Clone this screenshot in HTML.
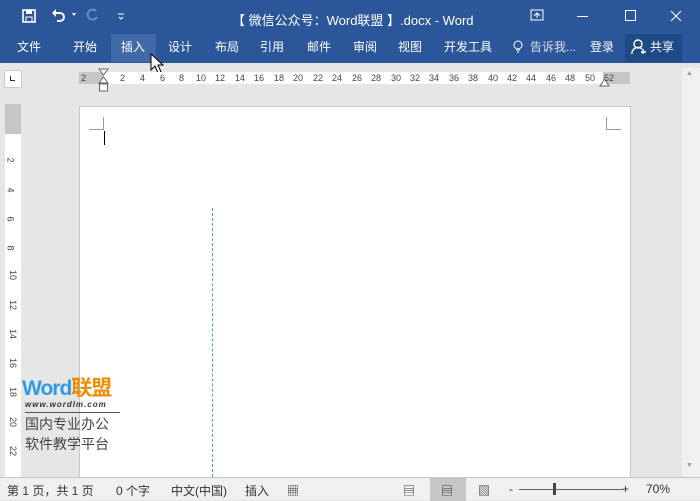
<!DOCTYPE html><html><head><meta charset="utf-8"><style>
*{margin:0;padding:0;box-sizing:border-box}
body{width:700px;height:500px;overflow:hidden;background:#e6e6e6;font-family:"Liberation Sans","Noto Sans CJK SC",sans-serif;position:relative}
.a{position:absolute}
#top{left:0;top:0;width:700px;height:63px;background:#2b579a;color:#fff}
.tab{position:absolute;top:38px;font-size:12px;color:#fff}
.rn{position:absolute;top:73px;font-size:9px;color:#444}
.vn{position:absolute;left:8px;font-size:9px;color:#444;transform:rotate(90deg)}
#sb{left:0;top:477px;width:700px;height:23px;background:#f0f0f0;border-top:1px solid #c6c6c6;font-size:12px;color:#333}
#sb span{position:absolute;top:4px}
</style></head><body>
<div id="top" class="a">
<svg class="a" style="left:22px;top:9px" width="14" height="14"><rect x="1" y="1" width="12" height="12" fill="none" stroke="#fff" stroke-width="1.6"/><rect x="4" y="1" width="6" height="4" fill="#fff"/><rect x="4" y="8" width="6" height="5" fill="none" stroke="#fff"/></svg>
<svg class="a" style="left:50px;top:7px" width="28" height="16"><path d="M4 6h6a4 4 0 0 1 0 8H7" stroke="#fff" stroke-width="2" fill="none"/><path d="M2 6l4-4v8z" fill="#fff"/><path d="M22 6l2 3 2-3z" fill="#fff"/></svg>
<svg class="a" style="left:86px;top:7px" width="14" height="16"><path d="M10 4a5 5 0 1 0 1 6" stroke="#6b8cc0" stroke-width="2" fill="none"/></svg>
<svg class="a" style="left:117px;top:12px" width="8" height="8"><path d="M1 2h6M2 5l2 2 2-2" stroke="#fff" fill="none"/></svg>
<div class="a" style="left:232px;top:10px;font-size:13px">【 微信公众号：Word联盟 】.docx - Word</div>
<svg class="a" style="left:530px;top:9px" width="14" height="12"><rect x="1" y="1" width="12" height="10" fill="none" stroke="#fff"/><path d="M4 7l3-3 3 3M7 4v5" stroke="#fff" fill="none"/></svg>
<div class="a" style="left:577px;top:16px;width:11px;height:1px;background:#fff"></div>
<div class="a" style="left:625px;top:10px;width:11px;height:11px;border:1px solid #fff"></div>
<svg class="a" style="left:670px;top:10px" width="12" height="12"><path d="M1 1l10 10M11 1L1 11" stroke="#fff"/></svg>
<div class="a" style="left:111px;top:34px;width:45px;height:28px;background:#4069aa"></div>
<div class="a" style="left:625px;top:34px;width:57px;height:28px;background:#1e4a85"></div>
<span class="tab" style="left:17px">文件</span><span class="tab" style="left:73px">开始</span><span class="tab" style="left:121px">插入</span><span class="tab" style="left:168px">设计</span><span class="tab" style="left:215px">布局</span><span class="tab" style="left:260px">引用</span><span class="tab" style="left:307px">邮件</span><span class="tab" style="left:353px">审阅</span><span class="tab" style="left:398px">视图</span><span class="tab" style="left:444px">开发工具</span>
<svg class="a" style="left:513px;top:40px" width="10" height="14"><circle cx="5" cy="5" r="4" fill="none" stroke="#fff"/><path d="M3 10h4M4 12h2" stroke="#fff"/></svg>
<span class="tab" style="left:530px;color:#dde">告诉我...</span><span class="tab" style="left:590px">登录</span>
<svg class="a" style="left:631px;top:39px" width="16" height="16"><circle cx="7" cy="5" r="4" fill="none" stroke="#fff" stroke-width="1.4"/><path d="M1 15a6 6 0 0 1 10-5M12 10v5M10 13h5" stroke="#fff" stroke-width="1.4" fill="none"/></svg>
<span class="tab" style="left:650px">共享</span>
</div>
<svg class="a" style="left:150px;top:53px" width="14" height="22"><path d="M1 1v16l4-4 3 7 3-1-3-7h5z" fill="#fff" stroke="#000"/></svg>
<div class="a" style="left:4px;top:70px;width:18px;height:18px;background:#fff;border:1px solid #ccc"></div>
<div class="a" style="left:10px;top:76px;width:5px;height:5px;border-left:1.5px solid #333;border-bottom:1.5px solid #333"></div>
<div class="a" style="left:79px;top:72px;width:24px;height:12px;background:#c6c6c6"></div>
<div class="a" style="left:103px;top:72px;width:500px;height:12px;background:#fff"></div>
<div class="a" style="left:603px;top:72px;width:27px;height:12px;background:#c6c6c6"></div>
<span class="rn" style="left:81px">2</span>
<svg class="a" style="left:98px;top:68px" width="12" height="26"><path d="M1 1h9L5.5 7z M5.5 9L1 15h9z" fill="#fff" stroke="#666"/><rect x="1.5" y="16" width="8" height="7" fill="#fff" stroke="#666"/></svg>
<svg class="a" style="left:599px;top:78px" width="12" height="10"><path d="M5.5 1L1 8h9z" fill="#fff" stroke="#666"/></svg>
<span class="rn" style="left:120px">2</span><span class="rn" style="left:140px">4</span><span class="rn" style="left:160px">6</span><span class="rn" style="left:179px">8</span><span class="rn" style="left:196px">10</span><span class="rn" style="left:215px">12</span><span class="rn" style="left:235px">14</span><span class="rn" style="left:254px">16</span><span class="rn" style="left:274px">18</span><span class="rn" style="left:293px">20</span><span class="rn" style="left:313px">22</span><span class="rn" style="left:332px">24</span><span class="rn" style="left:352px">26</span><span class="rn" style="left:371px">28</span><span class="rn" style="left:391px">30</span><span class="rn" style="left:410px">32</span><span class="rn" style="left:429px">34</span><span class="rn" style="left:449px">36</span><span class="rn" style="left:468px">38</span><span class="rn" style="left:488px">40</span><span class="rn" style="left:507px">42</span><span class="rn" style="left:526px">44</span><span class="rn" style="left:546px">46</span><span class="rn" style="left:565px">48</span><span class="rn" style="left:585px">50</span><span class="rn" style="left:604px">52</span>
<div class="a" style="left:5px;top:104px;width:16px;height:30px;background:#c6c6c6"></div>
<div class="a" style="left:5px;top:134px;width:16px;height:343px;background:#fff"></div>
<span class="vn" style="top:155px">2</span><span class="vn" style="top:185px">4</span><span class="vn" style="top:214px">6</span><span class="vn" style="top:243px">8</span><span class="vn" style="top:270px">10</span><span class="vn" style="top:300px">12</span><span class="vn" style="top:329px">14</span><span class="vn" style="top:358px">16</span><span class="vn" style="top:387px">18</span><span class="vn" style="top:417px">20</span><span class="vn" style="top:446px">22</span>
<div class="a" style="left:79px;top:106px;width:552px;height:371px;background:#fff;border:1px solid #c8c8c8;border-bottom:none"></div>
<div class="a" style="left:89px;top:117px;width:15px;height:13px;border-right:1px solid #999;border-bottom:1px solid #999"></div>
<div class="a" style="left:606px;top:117px;width:15px;height:13px;border-left:1px solid #999;border-bottom:1px solid #999"></div>
<div class="a" style="left:104px;top:131px;width:1px;height:14px;background:#000"></div>
<div class="a" style="left:212px;top:208px;height:269px;border-left:1px dashed #3aa7d8"></div>
<div class="a" style="left:682px;top:68px;width:18px;height:409px;background:#f0f0f0"></div>
<div class="a" style="left:686px;top:70px;font-size:7px;color:#999">▲</div>
<div class="a" style="left:686px;top:462px;font-size:7px;color:#999">▼</div>
<div class="a" style="left:22px;top:378px;font-size:21px;line-height:22px;font-weight:bold;color:#2f9be0;letter-spacing:-1px">Word<span style="color:#f08c00">联盟</span></div>
<div class="a" style="left:25px;top:400px;font-size:8px;line-height:10px;font-style:italic;font-weight:bold;color:#333;letter-spacing:1px">www.wordlm.com</div>
<div class="a" style="left:25px;top:412px;width:95px;height:1px;background:#555"></div>
<div class="a" style="left:25px;top:414px;font-size:14px;color:#444;line-height:20px">国内专业办公<br>软件教学平台</div>
<div id="sb" class="a"><span style="left:7px">第 1 页，共 1 页</span><span style="left:116px">0 个字</span><span style="left:171px">中文(中国)</span><span style="left:245px">插入</span><span style="left:287px">▦</span>
<span style="left:403px">▤</span><div class="a" style="left:430px;top:0;width:36px;height:23px;background:#c6c6c6"></div><span style="left:441px">▤</span><span style="left:478px">▧</span>
<span style="left:509px">-</span><div class="a" style="left:519px;top:11px;width:104px;height:1px;background:#666"></div><div class="a" style="left:553px;top:5px;width:3px;height:12px;background:#444"></div><span style="left:622px">+</span><span style="left:646px">70%</span></div>
</body></html>
